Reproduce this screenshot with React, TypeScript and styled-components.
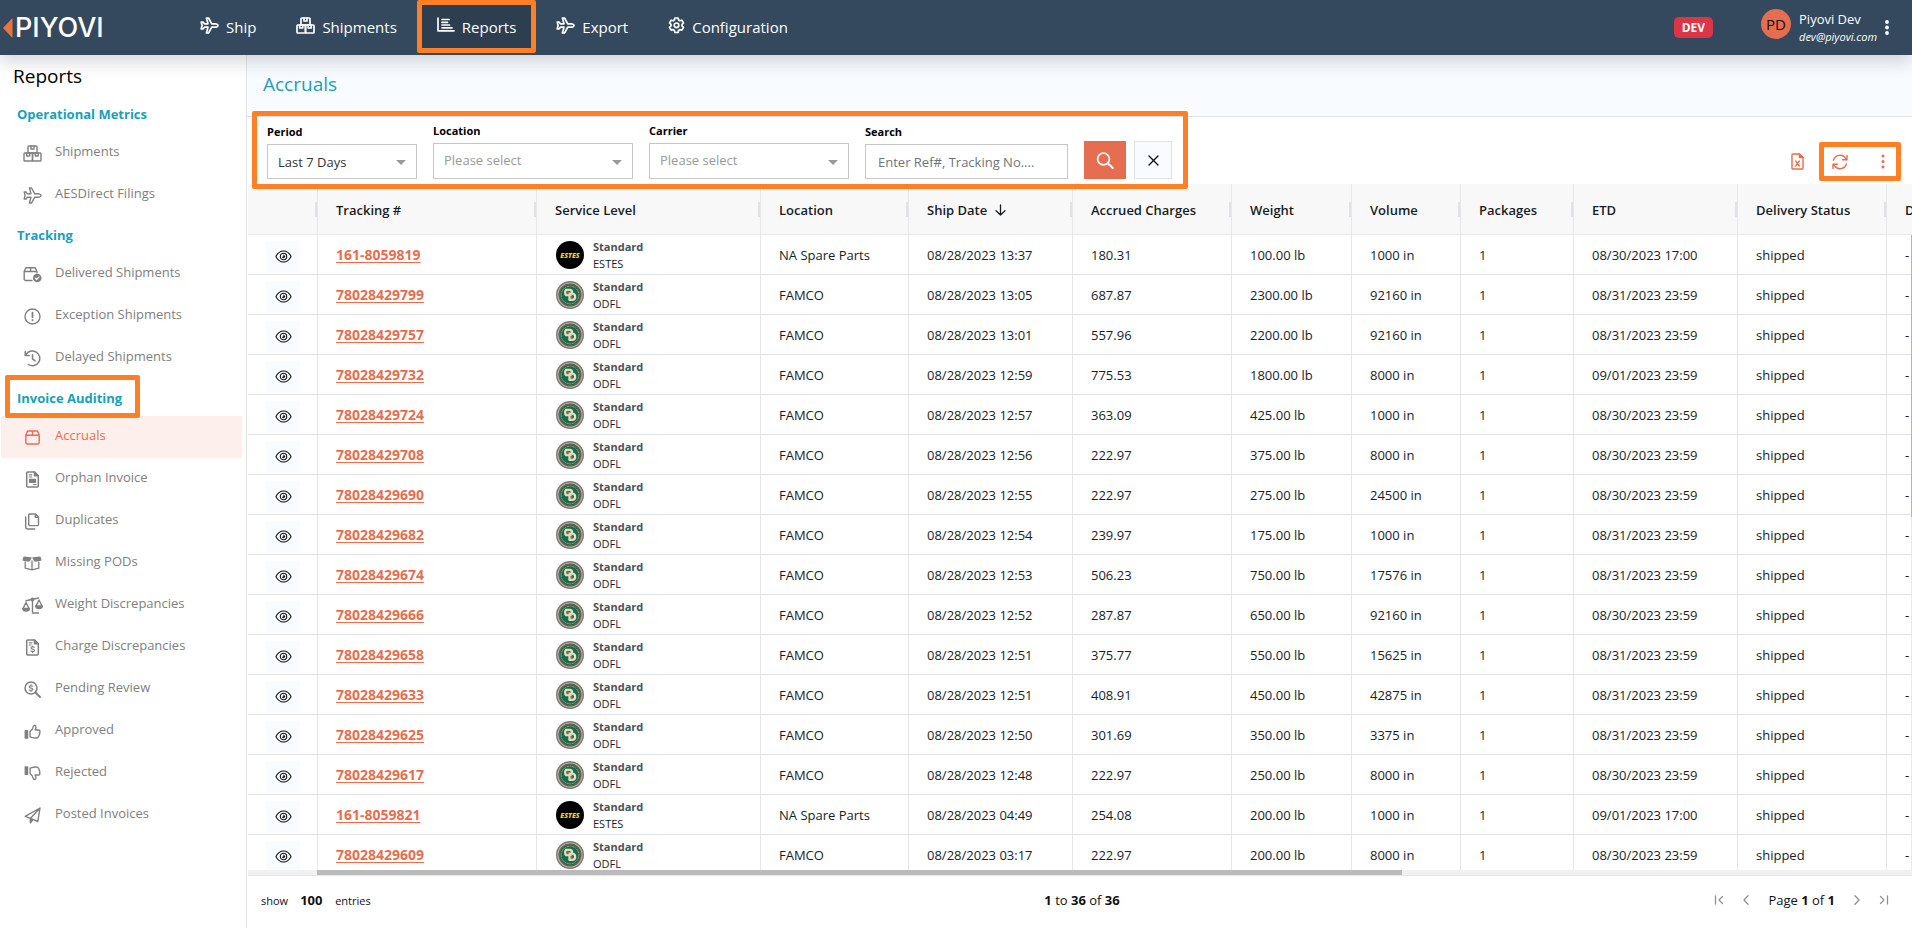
import React from "react";
import styled, { createGlobalStyle, css } from "styled-components";

const ink = "#181d1f";
const coral = "#e66e50";
const teal = "#1a9fb8";
const mark = "#ff7f27";
const line = "#dde2e8";

const GlobalStyle = createGlobalStyle`
  *, *::before, *::after { box-sizing: border-box; }
  body { margin: 0; background: #fff; color: #000; font-family: "Open Sans", "Noto Sans", sans-serif; font-size: 13px; }
  button, input, select { font: inherit; color: inherit; margin: 0; }
  button { cursor: pointer; }
`;

const Shell = styled.div`
  display: flex;
  flex-direction: column;
  height: 100vh;
  overflow: hidden;
`;

/* Orange frame drawn over the part it points out */
const Callout = styled.span`
  position: absolute;
  inset: 0;
  border: 5px solid ${mark};
  border-radius: 2px;
  pointer-events: none;
`;

/* ---------- icons ---------- */

const Svg = styled.svg<{ $w: number; $h: number }>`
  display: block;
  flex: none;
  width: ${(p) => p.$w}px;
  height: ${(p) => p.$h}px;
  fill: none;
  stroke: currentColor;
  stroke-linejoin: round;
  stroke-linecap: round;
`;

type IconProps = { bold?: boolean };

const Plane = ({ bold }: IconProps) => (
  <Svg $w={19} $h={17} viewBox="-24 -24 624 560" strokeWidth={bold ? 56 : 46} aria-hidden>
    <path d="M480 200H362L256 10h-70l52 190H120l-44-58H14l30 114-30 114h62l44-58h118l-52 190h70l106-190h118c34 0 88-26 88-56s-54-56-88-56z" />
  </Svg>
);

const Boxes = ({ bold }: IconProps) => (
  <Svg $w={19} $h={17} viewBox="0 0 19 17" strokeWidth={bold ? 1.7 : 1.4} aria-hidden>
    <rect x="5" y="1" width="9" height="7" rx="0.8" />
    <path d="M8 1v3h3V1" />
    <rect x="1" y="8" width="8.5" height="8" rx="0.8" />
    <rect x="9.5" y="8" width="8.5" height="8" rx="0.8" />
    <path d="M3.7 8v3h3V8M12.2 8v3h3V8" />
  </Svg>
);

const ChartBars = () => (
  <Svg $w={18} $h={16} viewBox="0 0 18 16" strokeWidth={1.7} aria-hidden>
    <path d="M1 1v12.8h16M5 2.500h7M5 5.300h5.500M5 8h7.500M5 10.800h10" />
  </Svg>
);

const Gear = () => (
  <Svg $w={17} $h={17} viewBox="0 0 17 17" strokeWidth={1.7} aria-hidden>
    <path d="M6.900 1h3.200l.5 2 1.300.8 2-.6 1.600 2.800-1.500 1.400v1.600l1.500 1.400-1.600 2.800-2-.6-1.300.8-.5 2.100H6.900l-.5-2.100-1.300-.8-2 .6-1.600-2.800L3 9V7.400L1.500 6l1.600-2.800 2 .6 1.300-.8z" />
    <circle cx="8.500" cy="8.300" r="2.300" />
  </Svg>
);

const BoxCheck = () => (
  <Svg $w={19} $h={17} viewBox="0 0 19 17" strokeWidth={1.4} aria-hidden>
    <path d="M9 14.500H2.500A1.300 1.300 0 0 1 1.200 13.200V5.500L2.800 1.700h9.400l1.800 3.800v1.300M1.200 5.500H14M7.600 1.700v3.800" />
    <circle cx="14.200" cy="12" r="4.300" fill="currentColor" stroke="none" />
    <path d="M12.300 12.200l1.300 1.300 2.500-2.600" stroke="#fff" strokeWidth="1.200" />
  </Svg>
);

const Alert = () => (
  <Svg $w={17} $h={17} viewBox="0 0 17 17" strokeWidth={1.400} aria-hidden>
    <circle cx="8.500" cy="8.500" r="7.500" />
    <path d="M8.500 4.600v4.600M8.500 12v.2" strokeWidth="1.800" />
  </Svg>
);

const HistoryIcon = () => (
  <Svg $w={17} $h={17} viewBox="0 0 17 17" strokeWidth={1.5} aria-hidden>
    <path d="M1.200 1.500v4h4M1.700 5.200A7.400 7.400 0 1 1 4.300 14.500M8.500 4.800v4l2.600 2" />
  </Svg>
);

const BoxIcon = () => (
  <Svg $w={17} $h={15} viewBox="0 0 17 15" strokeWidth={1.4} aria-hidden>
    <path d="M1.800 5.200L3.500 1h10l1.700 4.200v7.400a1.400 1.400 0 0 1-1.400 1.400H3.200a1.400 1.400 0 0 1-1.400-1.400zM1.800 5.200h13.400M8.500 1v4.200" />
  </Svg>
);

const fileOutline = "M2.700 1h6.800l3.800 3.800v10.200a1 1 0 0 1-1 1H2.700a1 1 0 0 1-1-1V2a1 1 0 0 1 1-1z";

const FileInvoice = () => (
  <Svg $w={15} $h={17} viewBox="0 0 15 17" strokeWidth={1.500} aria-hidden>
    <path d={fileOutline} />
    <path d="M9.500 1v3.800h3.800z" fill="currentColor" />
    <path d="M4.200 3.800h2.600M4.200 6h2.600M8.500 13.500h2.600" strokeWidth="1.200" />
    <path d="M4.600 8.400h5.800v2.800H4.600z" fill="currentColor" />
  </Svg>
);

const FileDollar = () => (
  <Svg $w={15} $h={17} viewBox="0 0 15 17" strokeWidth={1.500} aria-hidden>
    <path d={fileOutline} />
    <path d="M9.500 1v3.800h3.800z" fill="currentColor" />
    <path d="M4.200 3.800h2.600M4.200 6h2M9.400 8.200c-.8-.6-3.400-.8-3.400.8 0 1.500 3.400.8 3.400 2.400 0 1.500-2.600 1.400-3.600.7M7.600 7v1M7.600 12.400v1" strokeWidth="1.200" />
  </Svg>
);

const Copy = () => (
  <Svg $w={16} $h={17} viewBox="0 0 16 17" strokeWidth={1.400} aria-hidden>
    <path d="M5.700 1h5.800l3 3v7.600a1 1 0 0 1-1 1H5.700a1 1 0 0 1-1-1V2a1 1 0 0 1 1-1zM11.300 1v3.200h3.200M1.700 4v9.800A2.200 2.200 0 0 0 3.900 16h6.800" />
  </Svg>
);

const BoxOpen = () => (
  <Svg $w={20} $h={15} viewBox="0 0 20 15" strokeWidth={1.300} aria-hidden>
    <path d="M2 1.200L9 2 7.200 5 1.200 4zM18 1.200L11 2l1.800 3 6-1z" fill="currentColor" />
    <path d="M3.200 6v6.200l6.800 1.700 6.800-1.700V6M10 5v8.700" />
  </Svg>
);

const Scale = () => (
  <Svg $w={21} $h={17} viewBox="0 0 21 17" strokeWidth={1.400} aria-hidden>
    <path d="M4 3.800L16.500 1M10.500 2.600V16h6M1 11.500l3-6 3 6M14 9l3-6 3 6" />
    <path d="M.8 11.500h6.600c-.3 3.400-6.300 3.400-6.600 0zM13.700 9h6.600c-.3 3.400-6.300 3.400-6.600 0z" fill="currentColor" />
    <circle cx="10.500" cy="2.400" r="1.200" />
  </Svg>
);

const SearchDollar = () => (
  <Svg $w={17} $h={17} viewBox="0 0 17 17" strokeWidth={1.500} aria-hidden>
    <circle cx="7" cy="7" r="6" />
    <path d="M11.500 11.500L16 16" strokeWidth="1.900" />
    <path d="M8.800 5.200C8 4.600 5.300 4.500 5.300 6c0 1.500 3.500.7 3.500 2.200S6 9.700 5.100 8.900M7 3.500v1M7 9.500v1" strokeWidth="1.200" />
  </Svg>
);

const thumb = (
  <>
    <path d="M1 7h2.400v7.500H1z" fill="currentColor" />
    <path d="M6 7.700c2-1.200 3-3 3.500-5.400.2-1.200 2.900-1.200 2.500 1.400-.1 1-.4 1.700-.8 2.500h3.600c1.600.1 1.700 1.900.9 2.500.5.700.4 1.700-.3 2.200.2.800-.1 1.500-.7 1.900-.1 1-.8 1.700-2 1.700-3 .1-4.700-.6-6.700-1.200z" />
  </>
);

const ThumbUp = () => (
  <Svg $w={17} $h={15} viewBox="0 0 17 15.500" strokeWidth={1.400} aria-hidden>
    {thumb}
  </Svg>
);

const ThumbDown = () => (
  <Svg $w={17} $h={15} viewBox="0 0 17 15.500" strokeWidth={1.400} aria-hidden>
    <g transform="matrix(1 0 0 -1 0 15.500)">{thumb}</g>
  </Svg>
);

const PaperPlane = () => (
  <Svg $w={17} $h={17} viewBox="0 0 17 17" strokeWidth={1.400} aria-hidden>
    <path d="M1.200 9.300L16 1l-2.200 13.500-5-2.200L6.500 15.700v-4.400L16 1M1.200 9.300l5.300 2" />
    <path d="M6.500 11.500v4.200l2.300-3.300z" fill="currentColor" />
  </Svg>
);

const Eye = () => (
  <Svg $w={17} $h={13} viewBox="0 0 17 13" strokeWidth={1.100} aria-hidden>
    <path d="M.9 6.500C2.600 3.200 5.300 1 8.500 1s5.900 2.200 7.600 5.500C14.400 9.800 11.700 12 8.500 12S2.600 9.800.9 6.500z" />
    <circle cx="8.500" cy="6.500" r="3.200" />
    <path d="M8.600 5c1.300.3 1.900 1.500 1 2.500-.9.900-2.300.5-2.500-.6 1 .2 1.700-.8 1.500-1.900z" fill="currentColor" strokeWidth="0.300" />
  </Svg>
);

const Search = () => (
  <Svg $w={18} $h={17} viewBox="0 0 18 17" strokeWidth={1.700} aria-hidden>
    <circle cx="7.500" cy="7" r="5.900" />
    <path d="M12 11.500l4.800 4.500" strokeWidth="2" />
  </Svg>
);

const Close = () => (
  <Svg $w={11} $h={11} viewBox="0 0 11 11" strokeWidth={1.400} aria-hidden>
    <path d="M1 1l9 9M10 1l-9 9" />
  </Svg>
);

const Excel = () => (
  <Svg $w={13} $h={17} viewBox="0 0 13 17" strokeWidth={1.400} aria-hidden>
    <path d="M1.800 1h6.700L12 4.500v10.700a.8.800 0 0 1-.8.800H1.800a.8.800 0 0 1-.8-.8V1.800A.8.800 0 0 1 1.800 1z" />
    <path d="M8.500 1v3.500H12z" fill="currentColor" />
    <path d="M4.700 8l3.600 5M8.300 8l-3.600 5" />
  </Svg>
);

const Refresh = () => (
  <Svg $w={16} $h={16} viewBox="0 0 16 16" strokeWidth={1.400} aria-hidden>
    <path d="M1.500 6.200A6.800 6.800 0 0 1 13.700 4.300M14.500 9.800A6.800 6.800 0 0 1 2.300 11.700M15 1.500v4.300h-4.300M1 14.500v-4.300h4.300" />
  </Svg>
);

const Dots = ({ r = 1.500, h = 13 }: { r?: number; h?: number }) => (
  <Svg $w={4} $h={h + 2} viewBox={`0 0 4 ${h + 2}`} aria-hidden>
    {[2, (h + 2) / 2, h].map((y) => (
      <circle key={y} cx="2" cy={y} r={r} fill="currentColor" stroke="none" />
    ))}
  </Svg>
);

const SortDown = () => (
  <Svg $w={11} $h={12} viewBox="0 0 11 12" strokeWidth={1.300} aria-hidden>
    <path d="M5.500 1v10M1 6.700l4.500 4.300L10 6.700" />
  </Svg>
);

const Chevron = ({ flip, bar }: { flip?: boolean; bar?: boolean }) => (
  <Svg $w={10} $h={10} viewBox="0 0 10 10" strokeWidth={1.300} aria-hidden>
    <g transform={flip ? "matrix(-1 0 0 1 10 0)" : undefined}>
      <path d={bar ? "M8.500 1.500L5 5l3.500 3.500M1.500 1v8" : "M7 .8L3 5l4 4.200"} />
    </g>
  </Svg>
);

/* ---------- header ---------- */

const Header = styled.header`
  position: relative;
  z-index: 2;
  display: flex;
  align-items: stretch;
  flex: none;
  height: 55px;
  background: #34495e;
  color: #fff;
  box-shadow: 0 8px 16px rgba(0, 0, 0, 0.15);
`;

const Logo = styled.a`
  display: flex;
  align-items: center;
  gap: 2px;
  width: 180px;
  padding-left: 3px;
  color: #fff;
  font-family: Inter, sans-serif;
  font-size: 27px;
  font-weight: 500;
  text-decoration: none;
`;

const Nav = styled.nav`
  display: flex;
`;

const NavLink = styled.a<{ $active?: boolean }>`
  position: relative;
  display: flex;
  align-items: center;
  gap: 7px;
  height: 53px;
  padding: 0 20px;
  background: ${(p) => (p.$active ? "#2c3e50" : "transparent")};
  color: #fff;
  font-size: 15px;
  text-decoration: none;
  svg { margin-bottom: 3px; }
`;

const Spacer = styled.div`
  flex: 1;
`;

const Env = styled.span`
  align-self: center;
  margin-right: 48px;
  padding: 0 8px;
  border-radius: 5px;
  background: #dc3545;
  font-size: 12px;
  font-weight: 700;
  line-height: 21px;
`;

const User = styled.div`
  display: flex;
  gap: 8px;
  padding-top: 9px;
`;

const Avatar = styled.span`
  width: 30px;
  height: 30px;
  border-radius: 50%;
  background: ${coral};
  color: #111;
  font-size: 15px;
  line-height: 31px;
  text-align: center;
`;

const Name = styled.div`
  font-size: 13px;
  line-height: 20px;
`;

const Mail = styled.div`
  font-size: 11px;
  font-style: italic;
  font-weight: 500;
  line-height: 16px;
`;

const IconButton = styled.button`
  display: flex;
  align-items: center;
  justify-content: center;
  padding: 0;
  border: 0;
  background: none;
`;

const UserMenu = styled(IconButton)`
  width: 20px;
  margin-right: 15px;
`;

/* ---------- body ---------- */

const Body = styled.div`
  display: flex;
  flex: 1;
  min-height: 0;
`;

const Sidebar = styled.aside`
  flex: none;
  width: 247px;
  border-right: 1px solid #e4e4e6;
`;

const SideTitle = styled.h1`
  height: 40px;
  margin: 0;
  padding-left: 13px;
  font-size: 19px;
  font-weight: 500;
  line-height: 42px;
`;

const Group = styled.h2`
  position: relative;
  width: fit-content;
  margin: 0;
  padding: 1px 16px 0 17px;
  color: ${teal};
  font-size: 13px;
  font-weight: 700;
  line-height: 36px;
`;

const GroupCallout = styled(Callout)`
  inset: -4px -2px -2px 5px;
`;

const SideLink = styled.a<{ $active?: boolean }>`
  display: flex;
  align-items: center;
  gap: 12px;
  height: 42px;
  margin: 0 4px 0 1px;
  padding-left: 20px;
  background: ${(p) => (p.$active ? "#fdefec" : "transparent")};
  color: ${(p) => (p.$active ? coral : "#808080")};
  font-size: 13px;
  text-decoration: none;
`;

const SideIcon = styled.span`
  display: flex;
  justify-content: center;
  width: 22px;
`;

const SideText = styled.span`
  padding-bottom: 4px;
`;

const Main = styled.main`
  display: flex;
  flex: 1;
  flex-direction: column;
  min-width: 0;
`;

const TitleBar = styled.div`
  flex: none;
  height: 62px;
  padding-left: 16px;
  border-bottom: 1px solid #dee2e6;
  background: #f8fbff;
`;

const Title = styled.h2`
  margin: 0;
  color: ${teal};
  font-size: 19px;
  font-weight: 500;
  line-height: 58px;
`;

const Toolbar = styled.div`
  display: flex;
  align-items: flex-end;
  justify-content: space-between;
  flex: none;
  height: 67px;
  padding: 0 11px 5px 20px;
`;

const Filters = styled.form`
  position: relative;
  z-index: 1;
  display: flex;
  align-items: flex-end;
  gap: 16px;
`;

const FilterCallout = styled(Callout)`
  inset: -12px -16px -10px -15px;
`;

const Field = styled.div<{ $width: number }>`
  position: relative;
  display: flex;
  flex-direction: column;
  width: ${(p) => p.$width}px;
`;

const Label = styled.label`
  font-size: 11px;
  font-weight: 700;
  line-height: 16px;
  padding-bottom: 4px;
`;

const control = css`
  width: 100%;
  border: 1px solid #c6c6c6;
  border-radius: 0;
  background: #fff;
  font-size: 13px;
  outline: none;
`;

const Select = styled.select<{ $empty?: boolean }>`
  ${control}
  appearance: none;
  height: ${(p) => (p.$empty ? 36 : 35)}px;
  padding: ${(p) => (p.$empty ? "0 30px 2px 10px" : "0 30px 0 10px")};
  color: ${(p) => (p.$empty ? "#999" : "#333")};
`;

const Arrow = styled.span`
  position: absolute;
  right: 11px;
  bottom: 14px;
  border: 5px solid transparent;
  border-top-color: #999;
  border-bottom: 0;
  pointer-events: none;
`;

const Input = styled.input`
  ${control}
  height: 35px;
  padding: 0 12px;
  &::placeholder { color: #6c757d; opacity: 1; }
`;

const Actions = styled.div`
  display: flex;
  gap: 8px;
`;

const SearchButton = styled(IconButton)`
  width: 42px;
  height: 38px;
  background: ${coral};
  color: #fff;
`;

const ClearButton = styled(IconButton)`
  width: 38px;
  height: 38px;
  border: 1px solid #dee2e6;
  background: #f8fbff;
  color: #111;
`;

const Tools = styled.div`
  position: relative;
  z-index: 1;
  display: flex;
  gap: 15px;
  height: 39px;
  margin-bottom: -2px;
  color: ${coral};
`;

const ToolGroup = styled.div`
  position: relative;
  display: flex;
  align-items: center;
  justify-content: space-between;
  width: 82px;
  padding: 0 16px 0 13px;
`;

/* ---------- grid ---------- */

const GridArea = styled.div`
  display: flex;
  flex: 1;
  min-height: 0;
  padding-left: 1px;
`;

const GridView = styled.div`
  flex: 1;
  min-width: 0;
  overflow: hidden;
`;

const VerticalBar = styled.div`
  flex: none;
  width: 1px;
  margin: 51px 0 0 -1px;
  background: linear-gradient(#b5b5b5 282px, #e9e9e9 282px);
`;

const Table = styled.table`
  width: 1900px;
  border-collapse: separate;
  border-spacing: 0;
  table-layout: fixed;
  color: ${ink};
  font-size: 13px;
`;

const Th = styled.th`
  position: relative;
  height: 51px;
  padding: 2px 18px 0;
  border-right: 1px solid #e6e7e9;
  border-bottom: 1px solid #e6e7e9;
  background: #f8f8f8;
  font-size: 13px;
  font-weight: 600;
  text-align: left;
  white-space: nowrap;
  &::after {
    content: "";
    position: absolute;
    top: 18px;
    right: 0;
    width: 2px;
    height: 15px;
    background: #dde2eb;
  }
`;

const HeadLabel = styled.span`
  display: flex;
  align-items: center;
  gap: 8px;
`;

const Td = styled.td`
  height: 40px;
  padding: 0 18px;
  border-right: 1px solid #e6e7e9;
  border-bottom: 1px solid ${line};
  white-space: nowrap;
`;

const EyeButton = styled(IconButton)`
  width: 34px;
  height: 31px;
  margin-top: 4px;
  background: #f8fbff;
  color: #111;
`;

const Tracking = styled.a`
  color: ${coral};
  font-size: 14px;
  font-weight: 700;
  text-underline-offset: 2px;
`;

const Service = styled.div`
  display: flex;
  align-items: center;
  gap: 9px;
  padding-left: 1px;
`;

const ServiceText = styled.div`
  padding-top: 1px;
  font-size: 11px;
  line-height: 17px;
`;

const Level = styled.div`
  color: #495057;
  font-weight: 700;
`;

const ScrollTrack = styled.div`
  display: flex;
  flex: none;
  height: 6px;
  margin-left: 1px;
  padding-left: 69px;
  border-bottom: 1px solid #e6e6e6;
  background: #f1f1f1;
`;

const ScrollThumb = styled.div`
  width: 68%;
  background: #bababa;
`;

const Footer = styled.footer`
  display: grid;
  grid-template-columns: 1fr auto 1fr;
  align-items: center;
  flex: none;
  height: 52px;
  padding: 0 23px 4px 14px;
  color: #111;
  font-size: 13px;
`;

const PageSize = styled.div`
  display: flex;
  align-items: center;
  gap: 12px;
  font-size: 11px;
`;

const SizeSelect = styled.select`
  appearance: none;
  width: 23px;
  padding: 0;
  border: 0;
  background: none;
  font-size: 13px;
  font-weight: 700;
`;

const RangeText = styled.div`
  padding-left: 14px;
`;

const Pager = styled.div`
  display: flex;
  align-items: center;
  justify-content: flex-end;
  gap: 17px;
`;

const PageButton = styled(IconButton)`
  color: #8a8f98;
`;

/* ---------- data ---------- */

const nav = [
  { label: "Ship", icon: <Plane bold /> },
  { label: "Shipments", icon: <Boxes bold /> },
  { label: "Reports", icon: <ChartBars />, active: true },
  { label: "Export", icon: <Plane bold /> },
  { label: "Configuration", icon: <Gear /> },
];

const groups = [
  {
    title: "Operational Metrics",
    items: [
      { label: "Shipments", icon: <Boxes /> },
      { label: "AESDirect Filings", icon: <Plane /> },
    ],
  },
  {
    title: "Tracking",
    items: [
      { label: "Delivered Shipments", icon: <BoxCheck /> },
      { label: "Exception Shipments", icon: <Alert /> },
      { label: "Delayed Shipments", icon: <HistoryIcon /> },
    ],
  },
  {
    title: "Invoice Auditing",
    marked: true,
    items: [
      { label: "Accruals", icon: <BoxIcon />, active: true },
      { label: "Orphan Invoice", icon: <FileInvoice /> },
      { label: "Duplicates", icon: <Copy /> },
      { label: "Missing PODs", icon: <BoxOpen /> },
      { label: "Weight Discrepancies", icon: <Scale /> },
      { label: "Charge Discrepancies", icon: <FileDollar /> },
      { label: "Pending Review", icon: <SearchDollar /> },
      { label: "Approved", icon: <ThumbUp /> },
      { label: "Rejected", icon: <ThumbDown /> },
      { label: "Posted Invoices", icon: <PaperPlane /> },
    ],
  },
];

const columns: [string, number][] = [
  ["", 70],
  ["Tracking #", 219],
  ["Service Level", 224],
  ["Location", 148],
  ["Ship Date", 164],
  ["Accrued Charges", 159],
  ["Weight", 120],
  ["Volume", 109],
  ["Packages", 113],
  ["ETD", 164],
  ["Delivery Status", 149],
  ["Delivery Date", 261],
];

const rows = [
  ["161-8059819", "08/28/2023 13:37", "180.31", "100.00", "1000", "08/30/2023 17:00"],
  ["78028429799", "08/28/2023 13:05", "687.87", "2300.00", "92160", "08/31/2023 23:59"],
  ["78028429757", "08/28/2023 13:01", "557.96", "2200.00", "92160", "08/31/2023 23:59"],
  ["78028429732", "08/28/2023 12:59", "775.53", "1800.00", "8000", "09/01/2023 23:59"],
  ["78028429724", "08/28/2023 12:57", "363.09", "425.00", "1000", "08/30/2023 23:59"],
  ["78028429708", "08/28/2023 12:56", "222.97", "375.00", "8000", "08/30/2023 23:59"],
  ["78028429690", "08/28/2023 12:55", "222.97", "275.00", "24500", "08/30/2023 23:59"],
  ["78028429682", "08/28/2023 12:54", "239.97", "175.00", "1000", "08/31/2023 23:59"],
  ["78028429674", "08/28/2023 12:53", "506.23", "750.00", "17576", "08/31/2023 23:59"],
  ["78028429666", "08/28/2023 12:52", "287.87", "650.00", "92160", "08/30/2023 23:59"],
  ["78028429658", "08/28/2023 12:51", "375.77", "550.00", "15625", "08/31/2023 23:59"],
  ["78028429633", "08/28/2023 12:51", "408.91", "450.00", "42875", "08/31/2023 23:59"],
  ["78028429625", "08/28/2023 12:50", "301.69", "350.00", "3375", "08/31/2023 23:59"],
  ["78028429617", "08/28/2023 12:48", "222.97", "250.00", "8000", "08/30/2023 23:59"],
  ["161-8059821", "08/28/2023 04:49", "254.08", "200.00", "1000", "09/01/2023 17:00"],
  ["78028429609", "08/28/2023 03:17", "222.97", "200.00", "8000", "08/30/2023 23:59"],
];

const EstesLogo = () => (
  <Svg $w={28} $h={28} viewBox="0 0 28 28" aria-hidden>
    <circle cx="14" cy="14" r="14" fill="#000" stroke="none" />
    <text x="14" y="16.500" textAnchor="middle" fill="#f7d31c" stroke="none" fontFamily="Open Sans, sans-serif" fontSize="7" fontStyle="italic" fontWeight="800">
      ESTES
    </text>
  </Svg>
);

const OdflLogo = () => (
  <Svg $w={28} $h={28} viewBox="0 0 28 28" aria-hidden>
    <circle cx="14" cy="14" r="13.300" fill="#b4b5b0" stroke="#777b78" strokeWidth="1.400" />
    <circle cx="14" cy="14" r="10.900" fill="#1d6a48" stroke="#7a5b45" strokeWidth="1.200" />
    <circle cx="14" cy="14" r="8.900" stroke="#7fa893" strokeWidth="1" strokeDasharray="1.200 1.400" />
    <path d="M10 8.800h3.800c2.800.2 3.600 4.800-.1 5.300h-3.600c-1.200-1-1.200-4.200-.1-5.300zM13.500 12.600h2.800c3.800.3 3.800 6 .1 6.300h-2.900z" stroke="#e4dcc4" strokeWidth="2.300" />
    <path d="M12 10v3.500M15.800 13.800v4" stroke="#b58b4c" strokeWidth="0.900" />
  </Svg>
);

const FilterSelect = ({ id, label, width, value, empty }: { id: string; label: string; width: number; value: string; empty?: boolean }) => (
  <Field $width={width}>
    <Label htmlFor={id}>{label}</Label>
    <Select id={id} $empty={empty}>
      <option>{value}</option>
    </Select>
    <Arrow />
  </Field>
);

export default function App() {
  return (
    <Shell>
      <GlobalStyle />
      <Header>
        <Logo href="#">
          <Svg $w={10} $h={20} viewBox="0 0 10 20" aria-hidden>
            <path d="M0 10L9.500 0v20z" fill="#e8743f" stroke="none" />
          </Svg>
          PIYOVI
        </Logo>
        <Nav>
          {nav.map((n) => (
            <NavLink key={n.label} href="#" $active={n.active}>
              {n.icon}
              {n.label}
              {n.active && <Callout />}
            </NavLink>
          ))}
        </Nav>
        <Spacer />
        <Env>DEV</Env>
        <User>
          <Avatar>PD</Avatar>
          <div>
            <Name>Piyovi Dev</Name>
            <Mail>dev@piyovi.com</Mail>
          </div>
        </User>
        <UserMenu aria-label="User menu">
          <Dots r={1.900} />
        </UserMenu>
      </Header>

      <Body>
        <Sidebar>
          <SideTitle>Reports</SideTitle>
          {groups.map((g) => (
            <section key={g.title}>
              <Group>
                {g.title}
                {g.marked && <GroupCallout />}
              </Group>
              {g.items.map((item) => (
                <SideLink key={item.label} href="#" $active={"active" in item}>
                  <SideIcon>{item.icon}</SideIcon>
                  <SideText>{item.label}</SideText>
                </SideLink>
              ))}
            </section>
          ))}
        </Sidebar>

        <Main>
          <TitleBar>
            <Title>Accruals</Title>
          </TitleBar>
          <Toolbar>
            <Filters onSubmit={(e) => e.preventDefault()}>
              <FilterSelect id="period" label="Period" width={150} value="Last 7 Days" />
              <FilterSelect id="location" label="Location" width={200} value="Please select" empty />
              <FilterSelect id="carrier" label="Carrier" width={200} value="Please select" empty />
              <Field $width={203}>
                <Label htmlFor="search">Search</Label>
                <Input id="search" placeholder="Enter Ref#, Tracking No...." />
              </Field>
              <Actions>
                <SearchButton type="submit" aria-label="Search">
                  <Search />
                </SearchButton>
                <ClearButton type="button" aria-label="Clear">
                  <Close />
                </ClearButton>
              </Actions>
              <FilterCallout />
            </Filters>
            <Tools>
              <IconButton aria-label="Export to Excel">
                <Excel />
              </IconButton>
              <ToolGroup>
                <IconButton aria-label="Refresh">
                  <Refresh />
                </IconButton>
                <IconButton aria-label="More">
                  <Dots r={1.500} />
                </IconButton>
                <Callout />
              </ToolGroup>
            </Tools>
          </Toolbar>

          <GridArea>
            <GridView>
              <Table>
                <colgroup>
                  {columns.map(([name, width]) => (
                    <col key={name} width={width} />
                  ))}
                </colgroup>
                <thead>
                  <tr>
                    {columns.map(([name]) => (
                      <Th key={name} scope="col">
                        <HeadLabel>
                          {name}
                          {name === "Ship Date" && <SortDown />}
                        </HeadLabel>
                      </Th>
                    ))}
                  </tr>
                </thead>
                <tbody>
                  {rows.map(([id, date, charge, weight, volume, etd]) => {
                    const estes = id.startsWith("161");
                    return (
                      <tr key={id}>
                        <Td>
                          <EyeButton aria-label={`View ${id}`}>
                            <Eye />
                          </EyeButton>
                        </Td>
                        <Td>
                          <Tracking href="#">{id}</Tracking>
                        </Td>
                        <Td>
                          <Service>
                            {estes ? <EstesLogo /> : <OdflLogo />}
                            <ServiceText>
                              <Level>Standard</Level>
                              {estes ? "ESTES" : "ODFL"}
                            </ServiceText>
                          </Service>
                        </Td>
                        <Td>{estes ? "NA Spare Parts" : "FAMCO"}</Td>
                        <Td>{date}</Td>
                        <Td>{charge}</Td>
                        <Td>{weight} lb</Td>
                        <Td>{volume} in</Td>
                        <Td>1</Td>
                        <Td>{etd}</Td>
                        <Td>shipped</Td>
                        <Td>-</Td>
                      </tr>
                    );
                  })}
                </tbody>
              </Table>
            </GridView>
            <VerticalBar />
          </GridArea>
          <ScrollTrack>
            <ScrollThumb />
          </ScrollTrack>

          <Footer>
            <PageSize>
              <label htmlFor="size">show</label>
              <SizeSelect id="size">
                <option>100</option>
              </SizeSelect>
              <span>entries</span>
            </PageSize>
            <RangeText>
              <b>1</b> to <b>36</b> of <b>36</b>
            </RangeText>
            <Pager>
              <PageButton aria-label="First page">
                <Chevron bar />
              </PageButton>
              <PageButton aria-label="Previous page">
                <Chevron />
              </PageButton>
              <span>
                Page <b>1</b> of <b>1</b>
              </span>
              <PageButton aria-label="Next page">
                <Chevron flip />
              </PageButton>
              <PageButton aria-label="Last page">
                <Chevron bar flip />
              </PageButton>
            </Pager>
          </Footer>
        </Main>
      </Body>
    </Shell>
  );
}
